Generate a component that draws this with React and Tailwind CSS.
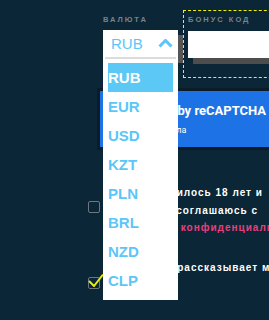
import { useState } from "react";

const currencies = ["RUB", "EUR", "USD", "KZT", "PLN", "BRL", "NZD", "CLP"];

function CurrencySelect() {
  const [value, setValue] = useState("RUB");
  return (
    <div className="relative h-[28px] w-[75px] bg-white shadow-[5px_5px_0_#555]">
      <div className="absolute left-0 top-0 z-10 w-[75px] bg-white pb-[5px]">
        <div className="flex h-[27px] items-center justify-between pl-[8px] pr-[5px]">
          <span className="text-[15px] leading-none text-[#5bc6f7]">{value}</span>
          <svg width="15" height="9" viewBox="0 0 15 9" fill="none">
            <polyline points="1.5,7.5 7.5,1.5 13.5,7.5" stroke="#5bc6f7" strokeWidth="3" />
          </svg>
        </div>
        <div className="mx-[2px] h-[2px] bg-[#dcdcdc]" />
        <ul className="px-[5px] pt-[4px]">
          {currencies.map((c) => (
            <li
              key={c}
              onClick={() => setValue(c)}
              className={`flex h-[29px] items-center text-[15px] font-bold leading-none ${
                c === value ? "bg-[#5bc8f5] text-white" : "text-[#5bc6f7]"
              }`}
            >
              {c}
            </li>
          ))}
        </ul>
      </div>
    </div>
  );
}

function Checkbox({ checked }) {
  return (
    <div className="relative h-[12px] w-[12px] shrink-0 rounded-[2px] border-[1.5px] border-[#6b7881]">
      {checked && (
        <svg className="absolute left-[-1px] top-[-5px]" width="17" height="14" viewBox="0 0 17 14" fill="none">
          <polyline points="1,8 6,13 15,1.5" stroke="#eeee00" strokeWidth="2" />
        </svg>
      )}
    </div>
  );
}

export default function App() {
  return (
    <div className="relative h-[320px] w-[269px] overflow-hidden bg-[#0a2637] font-['Liberation_Sans',Arial,sans-serif]">
      <div className="w-[420px] pl-[88px] pt-[10px]">
        <div className="ml-[15px] flex items-start gap-[5px]">
          <div className="w-[75px] shrink-0">
            <div className="mt-[6px] h-[8px] text-[7.5px] font-bold leading-[8px] tracking-[2px] text-[#7a838a]">ВАЛЮТА</div>
            <div className="mt-[6px]">
              <CurrencySelect />
            </div>
          </div>
          <div className="h-[68px] w-[200px] shrink-0 border border-dashed border-[#f2f200] pl-[4px] pt-[5px]">
            <div className="h-[8px] text-[7.5px] font-bold leading-[8px] tracking-[2px] text-[#7a838a]">БОНУС КОД</div>
            <div className="mt-[7px] h-[27px] w-[190px] bg-white shadow-[5px_6px_0_#4d4d4d]" />
          </div>
        </div>

        <div className="ml-[9px] mt-[10px] w-[300px] border-[3px] border-[#0b1c28]">
          <div className="h-[56px] bg-[#1d73e6] pl-[6px] pt-[12px] font-['Roboto',sans-serif] text-white">
            <div className="ml-[12px] whitespace-nowrap text-[13px] font-bold leading-[16px]">protected by reCAPTCHA</div>
            <div className="ml-[5px] mt-[5px] whitespace-nowrap text-[9px] leading-[12px]">Условия, правила</div>
          </div>
        </div>

        <div className="mt-[34px] flex gap-[8px]">
          <div className="mt-[17px]">
            <Checkbox />
          </div>
          <div className="whitespace-nowrap text-[10px] font-bold leading-[17.5px] tracking-[1px] text-white">
            <div>Мне исполнилось 18 лет и</div>
            <div>полностью соглашаюсь с</div>
            <div className="-ml-[3px]">
              с политикой <span className="text-[#ea3f7d]">конфиденциальности</span>
            </div>
          </div>
        </div>

        <div className="mt-[22px] flex gap-[8px]">
          <div className="mt-[18px]">
            <Checkbox checked />
          </div>
          <div className="whitespace-nowrap text-[10px] font-bold leading-[17.5px] tracking-[1px] text-white">
            <div className="pl-[5px]">Рассылка, рассказывает мне</div>
            <div>о бонусах</div>
          </div>
        </div>
      </div>
    </div>
  );
}
